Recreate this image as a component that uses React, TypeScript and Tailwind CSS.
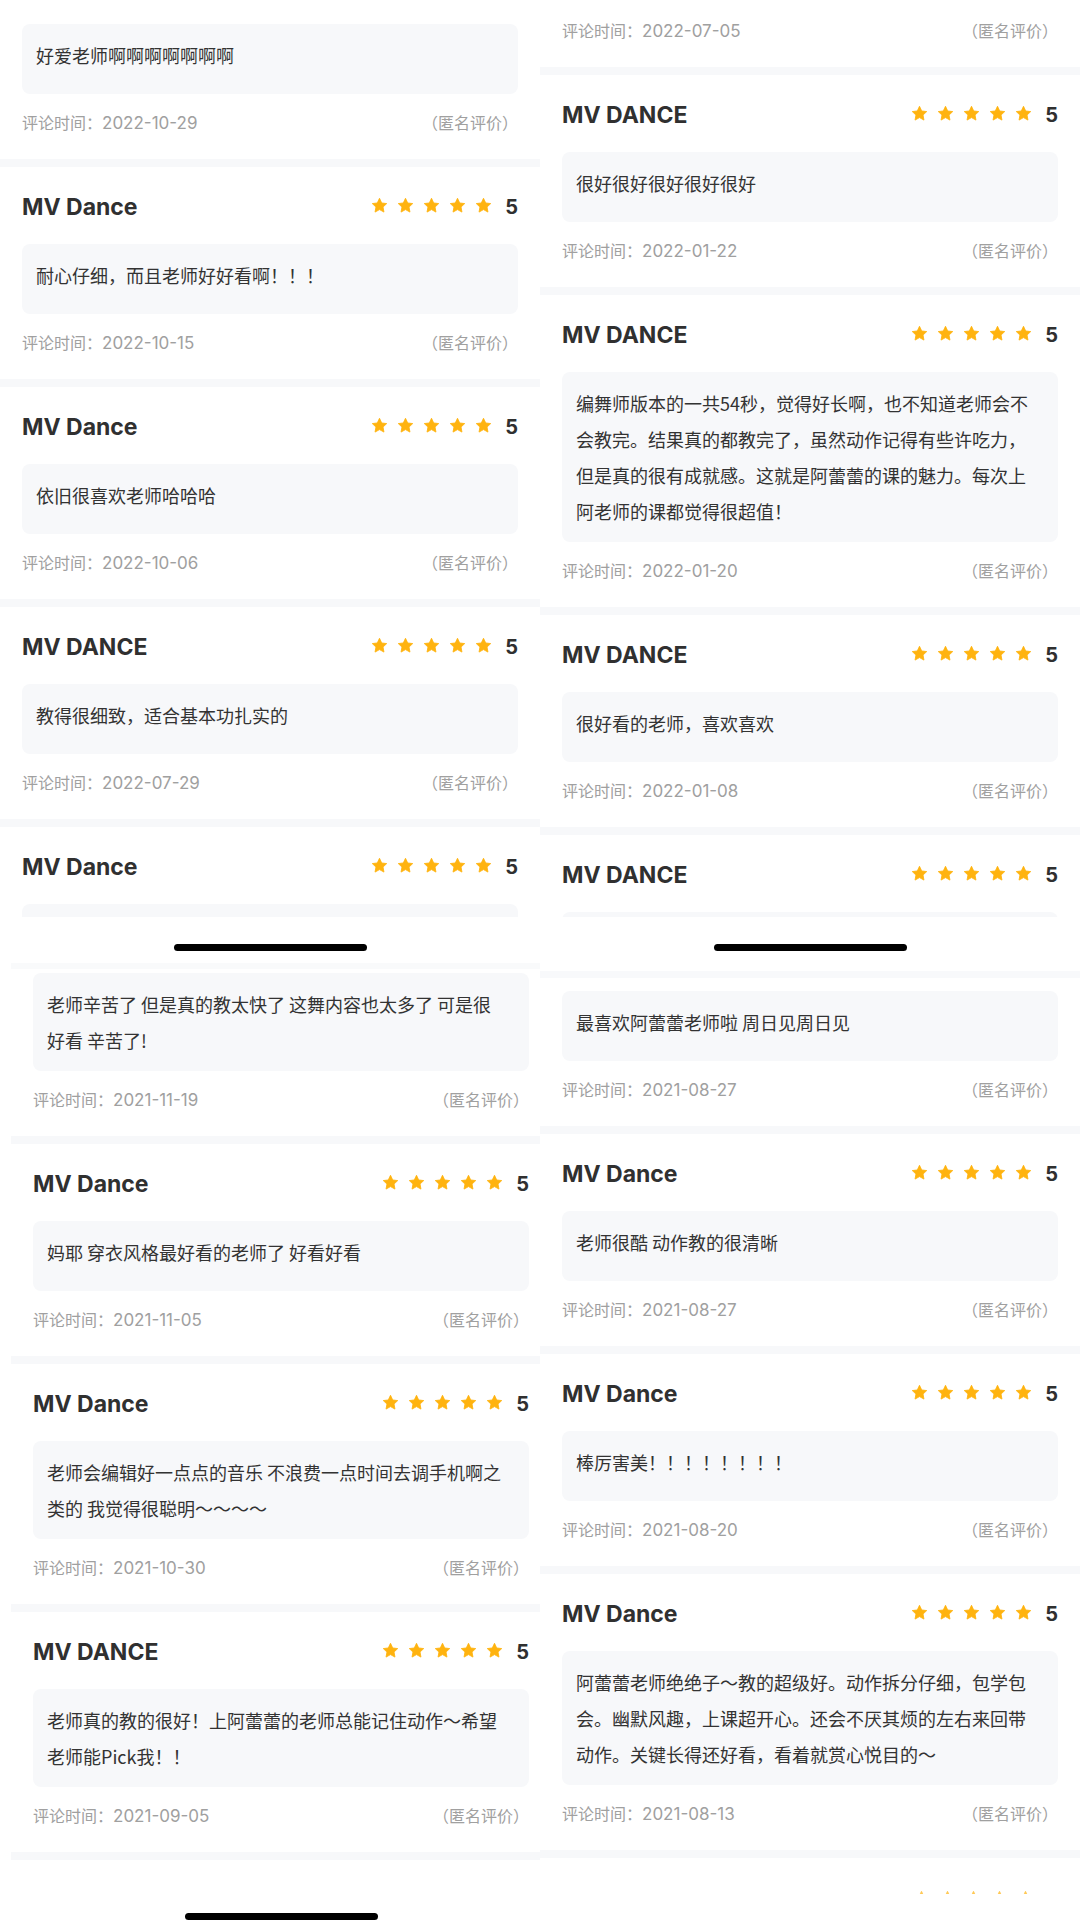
import React from "react";

type CardData = { name: string; lines: string[]; date: string };

const Star = () => (
  <svg width="17" height="17" viewBox="0 0 24 24" className="block">
    <path
      d="M12 1.8l3.1 6.6 7.1.9-5.2 4.9 1.3 7.1L12 17.8l-6.3 3.5 1.3-7.1L1.8 9.3l7.1-.9z"
      fill="#FFB30F"
      stroke="#FFB30F"
      strokeWidth="1.2"
      strokeLinejoin="round"
    />
  </svg>
);

const Stars = () => (
  <div className="flex gap-[9px]">
    <Star />
    <Star />
    <Star />
    <Star />
    <Star />
  </div>
);

const Separator = () => <div className="h-[8px] bg-[#f7f8fa]" />;

const Header = ({ name }: { name: string }) => (
  <div className="flex h-[30px] items-center justify-between">
    <span className="font-['Inter',sans-serif] text-[23px] font-bold text-[#303030]">{name}</span>
    <div className="flex items-center">
      <div className="-mt-[3px]">
        <Stars />
      </div>
      <span className="ml-[13px] font-['Inter',sans-serif] text-[20px] font-bold text-[#303030]">5</span>
    </div>
  </div>
);

const Body = ({ lines }: { lines: string[] }) => (
  <div className="min-h-[70px] rounded-[8px] bg-[#f7f8fa] px-[14px] py-[13px] font-['Noto_Sans_CJK_SC',sans-serif] text-[18px] leading-[36px] text-[#333333]">
    {lines.map((l, i) => (
      <div key={i} className="whitespace-nowrap">
        {l}
      </div>
    ))}
  </div>
);

const DateRow = ({ date }: { date: string }) => (
  <div className="flex h-[24px] items-center justify-between font-['Noto_Sans_CJK_SC',sans-serif] text-[16px] leading-[24px] text-[#a0a0a0]">
    <span className="flex items-baseline">
      <span>评论时间：</span>
      <span className="font-['Inter',sans-serif] text-[17px]">{date}</span>
    </span>
    <span>（匿名评价）</span>
  </div>
);

function Card({ name, lines, date }: CardData) {
  return (
    <div className="flex flex-col">
      <Separator />
      <div className="flex flex-col px-[22px] pt-[25px] pb-[25px]">
        <Header name={name} />
        <div className="mt-[22px]">
          <Body lines={lines} />
        </div>
        <div className="mt-[16px]">
          <DateRow date={date} />
        </div>
      </div>
    </div>
  );
}

/* a card whose top has scrolled out of view: only its text box and date show */
function TailCard({ lines, date, pt }: { lines: string[]; date: string; pt: string }) {
  return (
    <div className={`flex flex-col px-[22px] pb-[25px] ${pt}`}>
      <Body lines={lines} />
      <div className="mt-[16px]">
        <DateRow date={date} />
      </div>
    </div>
  );
}

/* a card whose bottom is cut by the screen edge */
function HeadCard({ name }: { name: string }) {
  return (
    <div className="flex flex-col">
      <Separator />
      <div className="flex flex-col px-[22px] pt-[25px]">
        <Header name={name} />
        <div className="mt-[22px] h-[70px] rounded-[8px] bg-[#f7f8fa]" />
      </div>
    </div>
  );
}

const HomeBar = () => <div className="h-[7px] w-[193px] rounded-full bg-black" />;

export default function App() {
  return (
    <div className="grid h-[1920px] w-[1080px] grid-cols-[540px_540px] grid-rows-[963px_957px] overflow-hidden bg-white">
      {/* top-left */}
      <div className="flex flex-col overflow-hidden bg-white">
        <div className="flex h-[917px] flex-col overflow-hidden">
          <TailCard pt="pt-[24px]" lines={["好爱老师啊啊啊啊啊啊啊"]} date="2022-10-29" />
          <Card name="MV Dance" lines={["耐心仔细，而且老师好好看啊！！！"]} date="2022-10-15" />
          <Card name="MV Dance" lines={["依旧很喜欢老师哈哈哈"]} date="2022-10-06" />
          <Card name="MV DANCE" lines={["教得很细致，适合基本功扎实的"]} date="2022-07-29" />
          <HeadCard name="MV Dance" />
        </div>
        <div className="flex h-[46px] justify-center bg-white pt-[27px]">
          <HomeBar />
        </div>
      </div>

      {/* top-right */}
      <div className="flex flex-col overflow-hidden bg-white">
        <div className="flex h-[917px] flex-col overflow-hidden">
          <div className="flex flex-col px-[22px] pt-[18px] pb-[25px]">
            <DateRow date="2022-07-05" />
          </div>
          <Card name="MV DANCE" lines={["很好很好很好很好很好"]} date="2022-01-22" />
          <Card
            name="MV DANCE"
            lines={[
              "编舞师版本的一共54秒，觉得好长啊，也不知道老师会不",
              "会教完。结果真的都教完了，虽然动作记得有些许吃力，",
              "但是真的很有成就感。这就是阿蕾蕾的课的魅力。每次上",
              "阿老师的课都觉得很超值！",
            ]}
            date="2022-01-20"
          />
          <Card name="MV DANCE" lines={["很好看的老师，喜欢喜欢"]} date="2022-01-08" />
          <HeadCard name="MV DANCE" />
        </div>
        <div className="flex h-[46px] justify-center bg-white pt-[27px]">
          <HomeBar />
        </div>
      </div>

      {/* bottom-left (this screenshot sits 11px to the right) */}
      <div className="overflow-hidden bg-white">
        <div className="ml-[11px] flex w-[540px] flex-col">
          <div className="flex h-[912px] flex-col overflow-hidden">
            <div className="h-[6px] bg-[#f9fafb]" />
            <TailCard
              pt="pt-[4px]"
              lines={["老师辛苦了 但是真的教太快了 这舞内容也太多了 可是很", "好看 辛苦了!"]}
              date="2021-11-19"
            />
            <Card name="MV Dance" lines={["妈耶 穿衣风格最好看的老师了 好看好看"]} date="2021-11-05" />
            <Card
              name="MV Dance"
              lines={["老师会编辑好一点点的音乐 不浪费一点时间去调手机啊之", "类的 我觉得很聪明～～～～"]}
              date="2021-10-30"
            />
            <Card
              name="MV DANCE"
              lines={["老师真的教的很好！上阿蕾蕾的老师总能记住动作～希望", "老师能Pick我！！"]}
              date="2021-09-05"
            />
            <Separator />
          </div>
          <div className="flex h-[45px] justify-center bg-white pt-[38px]">
            <HomeBar />
          </div>
        </div>
      </div>

      {/* bottom-right */}
      <div className="flex flex-col overflow-hidden bg-white">
        <div className="flex h-[912px] flex-col overflow-hidden">
          <div className="h-[8px] bg-white" />
          <div className="h-[7px] bg-[#f8f9fb]" />
          <TailCard pt="pt-[13px]" lines={["最喜欢阿蕾蕾老师啦 周日见周日见"]} date="2021-08-27" />
          <Card name="MV Dance" lines={["老师很酷 动作教的很清晰"]} date="2021-08-27" />
          <Card name="MV Dance" lines={["棒厉害美！！！！！！！！"]} date="2021-08-20" />
          <Card
            name="MV Dance"
            lines={[
              "阿蕾蕾老师绝绝子～教的超级好。动作拆分仔细，包学包",
              "会。幽默风趣，上课超开心。还会不厌其烦的左右来回带",
              "动作。关键长得还好看，看着就赏心悦目的～",
            ]}
            date="2021-08-13"
          />
          <Separator />
        </div>
        <div className="flex h-[45px] flex-col bg-white pt-[15px]">
          <div className="flex h-[4px] justify-end overflow-hidden pr-[22px] opacity-70">
            <Stars />
            <span className="ml-[13px] w-[11px]" />
          </div>
        </div>
      </div>
    </div>
  );
}
